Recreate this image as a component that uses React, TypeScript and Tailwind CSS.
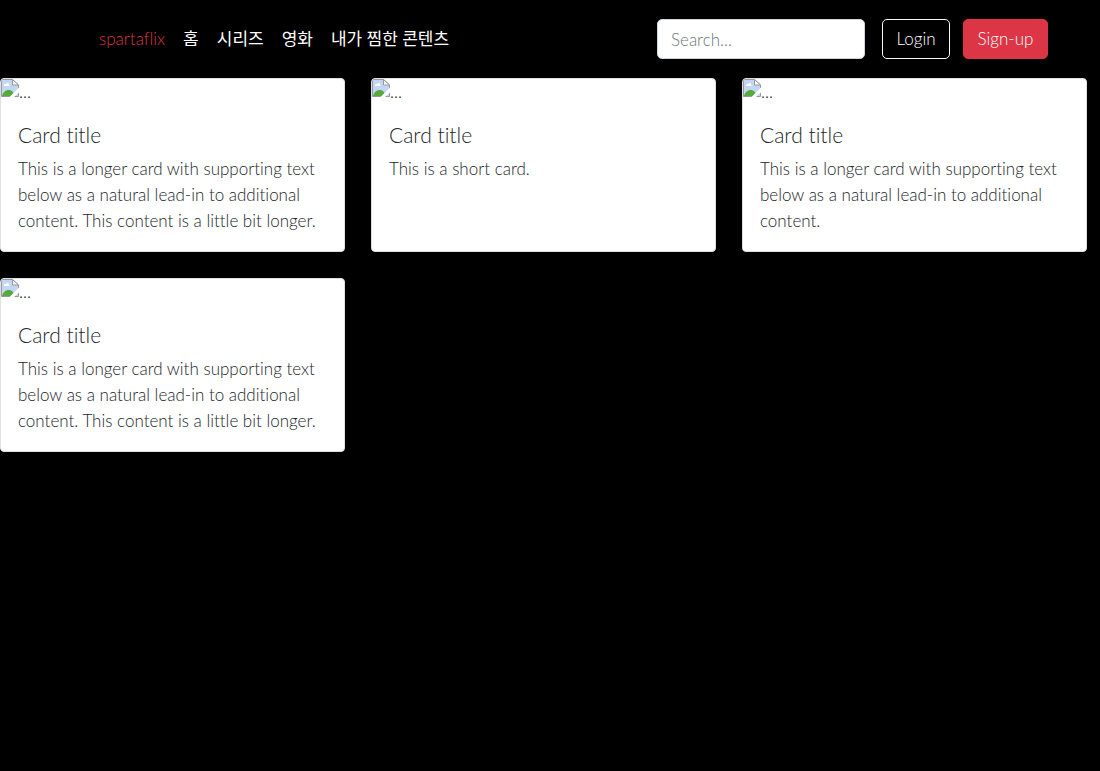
const navLinks = ["홈", "시리즈", "영화", "내가 찜한 콘텐츠"];

const longText =
  "This is a longer card with supporting text below as a natural lead-in to additional content.";

const cards = [
  `${longText} This content is a little bit longer.`,
  "This is a short card.",
  longText,
  `${longText} This content is a little bit longer.`,
];

function BrokenImage() {
  return (
    <div className="flex h-[26px] items-start">
      <svg width="18" height="18" viewBox="0 0 18 18" className="shrink-0" aria-hidden="true">
        <path d="M.5.5h11l6 5.500v12H.5z" fill="#c3d6f6" />
        <path d="M3 7c-.3-1.500 1-2.300 2-1.700C5.500 3.300 8.500 3.600 8.500 7z" fill="#fff" />
        <path d="M1 17c1-4 4-6.500 7.500-6 2.500.4 4 2 5.500 6z" fill="#56ab3c" />
        <path d="M.5.5h11l6 5.500v11.500H.5z" fill="none" stroke="#999" />
        <path d="M11.500.5v5.500h6z" fill="#fff" stroke="#999" />
        <path d="M18 8.500 8.500 18h4.500l5-4.500z" fill="#fff" />
      </svg>
      <span className="leading-[26px]">...</span>
    </div>
  );
}

function Card({ text }: { text: string }) {
  return (
    <article className="overflow-hidden rounded-[4px] border border-[#dfdfdf] bg-white text-[#212529]">
      <BrokenImage />
      <div className="p-[17px]">
        <h5 className="mb-2 text-[21px] leading-[26px]">Card title</h5>
        <p>{text}</p>
      </div>
    </article>
  );
}

export default function App() {
  return (
    <div className="min-h-screen bg-black font-['Lato','Noto_Sans_CJK_KR',sans-serif] text-[17px] leading-[26px] font-light [font-variant-ligatures:none]">
      <header className="flex items-center py-[19px] pr-[52px] pl-[90px] text-white">
        <nav className="mr-auto flex items-center">
          <a href="#" className="px-[9px] text-[#dc3545]">
            spartaflix
          </a>
          {navLinks.map((label) => (
            <a key={label} href="#" className="px-[9px] font-normal">
              {label}
            </a>
          ))}
        </nav>
        <form role="search" className="mr-[17px]" onSubmit={(e) => e.preventDefault()}>
          <input
            type="search"
            aria-label="Search"
            placeholder="Search..."
            className="block h-10 w-[208px] rounded-[5px] border border-[#ced4da] bg-white px-[13px] text-[#212529] placeholder:text-[#6c757d]"
          />
        </form>
        <div className="flex gap-[13px]">
          <button type="button" className="h-10 w-[68px] rounded-[5px] border border-[#f8f9fa]">
            Login
          </button>
          <button type="button" className="h-10 w-[85px] rounded-[5px] border border-[#dc3545] bg-[#dc3545]">
            Sign-up
          </button>
        </div>
      </header>
      <main className="grid grid-cols-3 gap-[26px] pr-[13px]">
        {cards.map((text, i) => (
          <Card key={i} text={text} />
        ))}
      </main>
    </div>
  );
}
